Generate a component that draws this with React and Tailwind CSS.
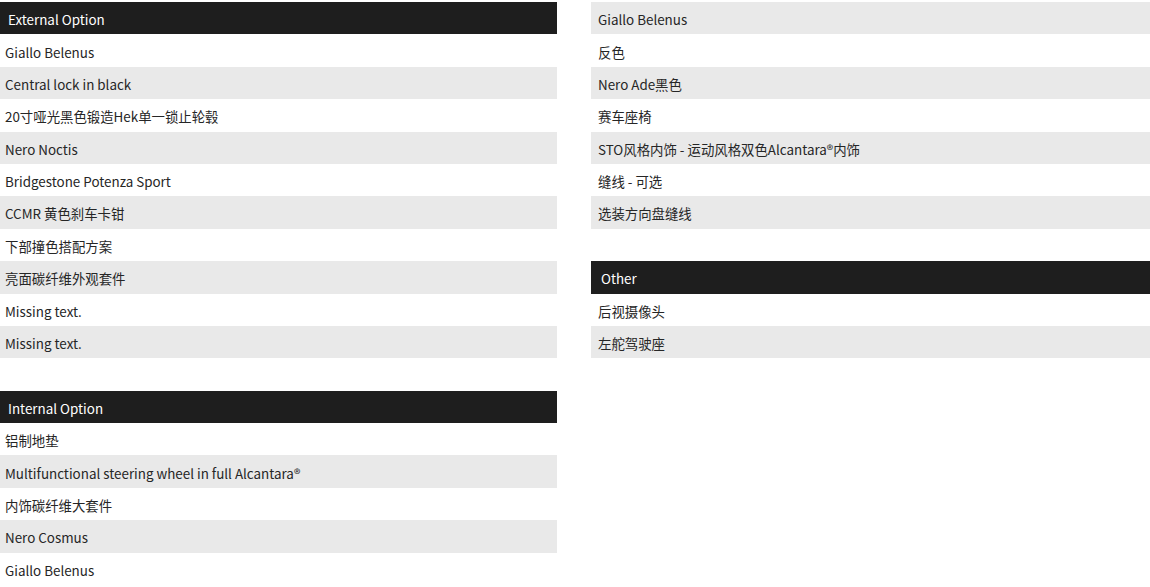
import React from "react";

const left = [
  { title: "External Option" },
  "Giallo Belenus",
  "Central lock in black",
  "20寸哑光黑色锻造Hek单一锁止轮毂",
  "Nero Noctis",
  "Bridgestone Potenza Sport",
  "CCMR 黄色刹车卡钳",
  "下部撞色搭配方案",
  "亮面碳纤维外观套件",
  "Missing text.",
  "Missing text.",
  null,
  { title: "Internal Option" },
  "铝制地垫",
  "Multifunctional steering wheel in full Alcantara®",
  "内饰碳纤维大套件",
  "Nero Cosmus",
  "Giallo Belenus",
];

const right = [
  "Giallo Belenus",
  "反色",
  "Nero Ade黑色",
  "赛车座椅",
  "STO风格内饰 - 运动风格双色Alcantara®内饰",
  "缝线 - 可选",
  "选装方向盘缝线",
  null,
  { title: "Other" },
  "后视摄像头",
  "左舵驾驶座",
];

function Column({ items, firstGray, headPad, rowPad }) {
  let idx = firstGray ? 1 : 0;
  return (
    <div className="flex flex-col">
      {items.map((it, i) => {
        if (it === null) {
          idx = 0;
          return <div key={i} className="h-[32.4px]" />;
        }
        if (typeof it === "object") {
          idx = 0;
          return (
            <div
              key={i}
              className={`h-[32.4px] pt-[2px] flex items-center bg-[#1e1e1e] text-white ${headPad}`}
            >
              {it.title}
            </div>
          );
        }
        idx += 1;
        const gray = idx % 2 === 0;
        return (
          <div
            key={i}
            className={`h-[32.4px] pt-[2px] flex items-center text-[#262626] ${rowPad} ${
              gray ? "bg-[#e9e9e9]" : "bg-white"
            }`}
          >
            {it}
          </div>
        );
      })}
    </div>
  );
}

export default function App() {
  return (
    <div
      className="w-[1150px] h-[587px] overflow-hidden bg-white pt-[2px] flex text-[13.4px]"
      style={{ fontFamily: '"Noto Sans CJK SC", "Noto Sans", sans-serif' }}
    >
      <div className="w-[557px]">
        <Column items={left} firstGray={false} headPad="pl-[8px]" rowPad="pl-[5px]" />
      </div>
      <div className="w-[559px] ml-[34px]">
        <Column items={right} firstGray={true} headPad="pl-[10px]" rowPad="pl-[7px]" />
      </div>
    </div>
  );
}
